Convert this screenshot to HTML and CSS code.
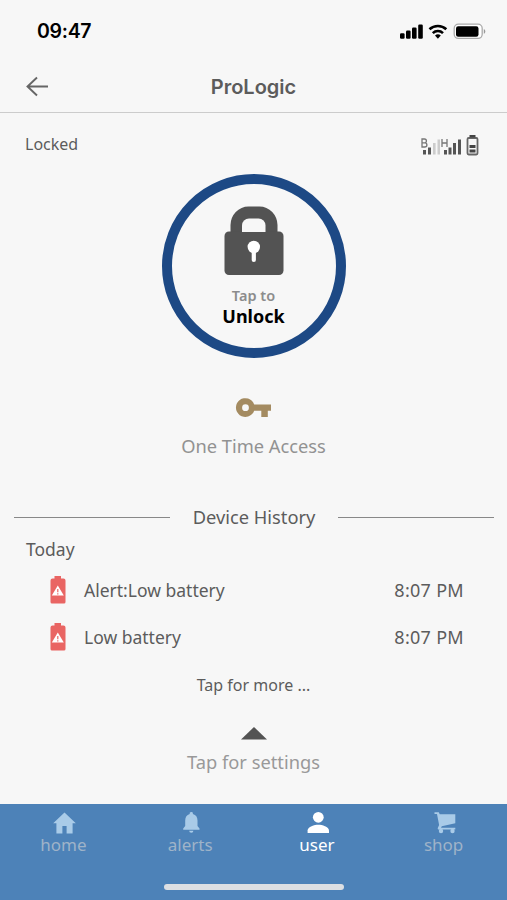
FILE: index.html
```html
<!DOCTYPE html>
<html lang="en">
<head>
    <meta charset="UTF-8">
    <meta name="viewport" content="width=device-width, initial-scale=1.0">
    <title>ProLogic</title>
    <link rel="stylesheet" href="styles.css">
</head>
<body>
    <div class="statusbar">
        <span class="clock">09:47</span>
        <svg class="phone-icons" width="88" height="18" viewBox="0 0 88 18">
            <rect x="1" y="11.2" width="4.6" height="5.6" rx="1.2"/>
            <rect x="7" y="8.6" width="4.6" height="8.2" rx="1.2"/>
            <rect x="13" y="5.6" width="4.6" height="11.2" rx="1.2"/>
            <rect x="19.2" y="2.5" width="4.6" height="14.3" rx="1.2"/>
            <path d="M30.500 7.300a12.200 12.200 0 0 1 16.800 0M33.800 11.100a7.400 7.400 0 0 1 10.200 0" fill="none" stroke="#000" stroke-width="2.6"/>
            <path d="M36 13.500a4.300 4.300 0 0 1 5.800 0l-2.900 3.200z"/>
            <rect x="55.2" y="2.2" width="28" height="14.2" rx="4.2" fill="#fff" stroke="#aaa" stroke-width="1.3"/>
            <rect x="57" y="4.3" width="22.5" height="10.4" rx="2.2"/>
            <path d="M84.800 7c2 .8 2 4 0 4.800z" fill="#999"/>
        </svg>
    </div>

    <div class="header">
        <svg class="back" width="24" height="22" viewBox="0 0 24 22">
            <path d="M23 10.500H2.500M12 1.500l-9.500 9 9.500 9" fill="none" stroke="#666" stroke-width="1.9"/>
        </svg>
        <h1>ProLogic</h1>
    </div>

    <div class="content">
        <div class="device-status">
            <span class="state">Locked</span>
            <svg width="60" height="24" viewBox="0 0 60 24">
                <path d="M2 4v8h2.800a2 2 0 0 0 0-4.200H2h2.500a1.900 1.900 0 0 0 0-3.800zM22 4v8M27 4v8M22 8h5" fill="none" stroke="#777" stroke-width="1.3"/>
                <path d="M3 15h3v4.500H3zM8 12.500h3v7H8zM24 15h3v4.500h-3zM28.500 12.500h3v7h-3zM33 8h3v11.500h-3zM38 4.500h3v15h-3z" fill="#555"/>
                <path d="M13 8h2.600v11.500H13zM17.500 4.500h2.500v15h-2.500z" fill="#ccc"/>
                <rect x="47.5" y="3" width="10" height="16.500" rx="1.2" fill="none" stroke="#666" stroke-width="1.8"/>
                <path d="M49.500 0h6v2.500h-6zM49.500 10h6v3h-6zM49.500 14.500h6v3h-6z" fill="#444"/>
            </svg>
        </div>

        <div class="lock-button">
            <svg width="60" height="70" viewBox="0 0 60 70">
                <path d="M6.500 26V19A18 18.500 0 0 1 24.500 .500h11A18 18.500 0 0 1 53.500 19V26z" fill="#535353"/>
                <rect x=".5" y="25.500" width="59" height="43.500" rx="4.5" fill="#535353"/>
                <path d="M18 26v-6.500a7 7 0 0 1 7-7h9.500a7 7 0 0 1 7 7V26z" fill="#f7f7f7"/>
                <circle cx="29.8" cy="41" r="6.2" fill="#fff"/>
                <path d="M27.700 44h4.200v10a2.100 2.100 0 0 1-4.200 0z" fill="#fff"/>
            </svg>
            <span class="tap-to">Tap to</span>
            <span class="unlock">Unlock</span>
        </div>

        <div class="access">
            <svg width="36" height="20" viewBox="0 0 36 20">
                <path fill-rule="evenodd" d="M19.200 6.500H36v6.200h-3.200v6.300h-6.500v-6.300h-7.100a9.400 9.400 0 1 1 0-6.200zM10.500 6.300a3.400 3.400 0 1 0 0 6.800 3.400 3.400 0 0 0 0-6.800z" fill="#a48b61"/>
            </svg>
            <span>One Time Access</span>
        </div>

        <div class="history-title"><span>Device History</span></div>

        <div class="history">
            <div class="day">Today</div>
            <div class="event">
                <svg width="16" height="28" viewBox="0 0 16 28">
                    <path d="M4.500 0h6.500v2.500h2.500a2 2 0 0 1 2 2V26a1.500 1.500 0 0 1-1.500 1.500H2A1.500 1.500 0 0 1 .5 26V4.500a2 2 0 0 1 2-2h2z" fill="#e96563"/>
                    <path d="M7.800 9.500l6 10H1.800z" fill="#fff"/>
                    <path d="M7.800 13v3.200M7.800 17.200v1.200" stroke="#e96563" stroke-width="1.2"/>
                </svg>
                <span class="event-name">Alert:Low battery</span>
                <span class="time">8:07 PM</span>
            </div>
            <div class="event">
                <svg width="16" height="28" viewBox="0 0 16 28">
                    <path d="M4.500 0h6.500v2.500h2.500a2 2 0 0 1 2 2V26a1.500 1.500 0 0 1-1.500 1.500H2A1.500 1.500 0 0 1 .5 26V4.500a2 2 0 0 1 2-2h2z" fill="#e96563"/>
                    <path d="M7.800 9.500l6 10H1.800z" fill="#fff"/>
                    <path d="M7.800 13v3.200M7.800 17.200v1.200" stroke="#e96563" stroke-width="1.2"/>
                </svg>
                <span class="event-name">Low battery</span>
                <span class="time">8:07 PM</span>
            </div>
        </div>

        <div class="more">Tap for more ...</div>

        <div class="settings">
            <svg width="27" height="13" viewBox="0 0 27 13">
                <path d="M14 0l13 12.500H1z" fill="#535353"/>
            </svg>
            <span>Tap for settings</span>
        </div>
    </div>

    <div class="tabbar">
        <div class="tab">
            <svg width="24" height="24" viewBox="0 0 24 24">
                <path d="M13.500 1.500L2.200 12.300h3.200V22.500h6v-7.500h4.200v7.500h6V12.300h3.200z"/>
            </svg>
            <span>home</span>
        </div>
        <div class="tab">
            <svg width="24" height="24" viewBox="0 0 24 24">
                <path d="M13.300 1a1.600 1.600 0 0 1 1.600 2C18 3.800 19.500 6.300 19.500 9.500V15l2 2.500v1.200H5.200v-1.200l2-2.500V9.500C7.200 6.300 8.700 3.800 11.700 3a1.600 1.600 0 0 1 1.600-2zM11.200 19.700h4.200a2.100 2.100 0 0 1-4.200 0z"/>
            </svg>
            <span>alerts</span>
        </div>
        <div class="tab active">
            <svg width="24" height="24" viewBox="0 0 24 24">
                <circle cx="13.3" cy="6.3" r="5.4"/>
                <path d="M2.600 22v-2.500c0-3.700 7-5.700 10.700-5.700s10.700 2 10.700 5.700V22z"/>
            </svg>
            <span>user</span>
        </div>
        <div class="tab">
            <svg width="24" height="24" viewBox="0 0 24 24">
                <path d="M2.500 1.200h4.300l.9 2.100h15.600v9l-13.500 3-.8 1.400h14.300v1.800H6.800c-1 0-1.300-1-.9-1.800l1.200-2.600L5 3.100H2.500z"/>
                <circle cx="9" cy="20" r="2.2"/>
                <circle cx="20.5" cy="20" r="2.2"/>
            </svg>
            <span>shop</span>
        </div>
        <div class="home-indicator"></div>
    </div>
</body>
</html>
```
FILE: styles.css
```css
* {
    margin: 0;
    padding: 0;
    box-sizing: border-box;
}
body {
    height: 900px;
    display: flex;
    flex-direction: column;
    overflow: hidden;
    background-color: #f7f7f7;
    color: #5c5c5c;
    font-family: 'Noto Sans', sans-serif;
    font-size: 17px;
}
svg {
    display: block;
    flex-shrink: 0;
    overflow: visible;
}
.statusbar {
    height: 62px;
    padding: 0 20px 0 37px;
    display: flex;
    align-items: center;
    justify-content: space-between;
}
.clock {
    font-family: Inter, sans-serif;
    font-size: 19.5px;
    font-weight: 600;
    letter-spacing: -0.3px;
    color: #000;
}
.header {
    height: 51px;
    padding: 0 25px;
    display: grid;
    grid-template-columns: 24px 1fr 24px;
    align-items: center;
    border-bottom: 1px solid #ccc;
}
.header h1 {
    font-family: Inter, sans-serif;
    font-size: 20px;
    font-weight: 600;
    text-align: center;
}
.content {
    flex: 1;
    display: flex;
    flex-direction: column;
    align-items: center;
}
.device-status {
    width: 100%;
    height: 61px;
    padding: 1px 27px 0 25px;
    display: flex;
    align-items: center;
    justify-content: space-between;
}
.device-status svg {
    margin-top: 6px;
}
.state {
    font-size: 16px;
}
.lock-button {
    width: 184px;
    height: 184px;
    padding-top: 22px;
    display: flex;
    flex-direction: column;
    align-items: center;
    border: 10px solid #1d4985;
    border-radius: 50%;
}
.tap-to {
    margin-top: 8px;
    font-size: 14.5px;
    font-weight: 600;
    line-height: 22px;
    color: #8c8c8c;
}
.unlock {
    font-size: 18px;
    font-weight: 700;
    line-height: 20px;
    color: #000;
}
.access {
    margin-top: 40px;
    display: flex;
    flex-direction: column;
    align-items: center;
    gap: 15px;
    font-size: 18.3px;
    line-height: 26px;
    color: #929292;
}
.history-title {
    width: 100%;
    margin-top: 45px;
    padding: 0 13px 0 14px;
    display: flex;
    align-items: center;
    gap: 23px;
    font-size: 18.3px;
    line-height: 26px;
}
.history-title::before,
.history-title::after {
    content: "";
    flex: 1;
    height: 1px;
    background-color: #888;
}
.history {
    width: 100%;
    padding: 5px 43px 0 26px;
    font-size: 17.5px;
}
.day {
    margin-bottom: 3px;
    line-height: 28px;
}
.event {
    height: 47.5px;
    padding-left: 24px;
    display: flex;
    align-items: center;
}
.event-name {
    flex: 1;
    margin-left: 18px;
}
.time {
    font-size: 18px;
    letter-spacing: 0.3px;
}
.more {
    margin-top: 12px;
    font-size: 16px;
    line-height: 24px;
}
.settings {
    margin-top: 30px;
    display: flex;
    flex-direction: column;
    align-items: center;
    gap: 9px;
    font-size: 18.3px;
    line-height: 26px;
    color: #999;
}
.tabbar {
    position: relative;
    height: 96px;
    padding-top: 7px;
    display: flex;
    align-items: flex-start;
    background-color: #4d82b8;
}
.tab {
    flex: 1;
    display: flex;
    flex-direction: column;
    align-items: center;
    line-height: 20px;
    color: #9fb3c8;
}
.tab svg {
    fill: #a9cbe8;
}
.tab.active {
    color: #fff;
}
.tab.active svg {
    fill: #fff;
}
.home-indicator {
    position: absolute;
    left: 164px;
    bottom: 10px;
    width: 180px;
    height: 6px;
    border-radius: 3px;
    background-color: #dcdfe3;
}
```
